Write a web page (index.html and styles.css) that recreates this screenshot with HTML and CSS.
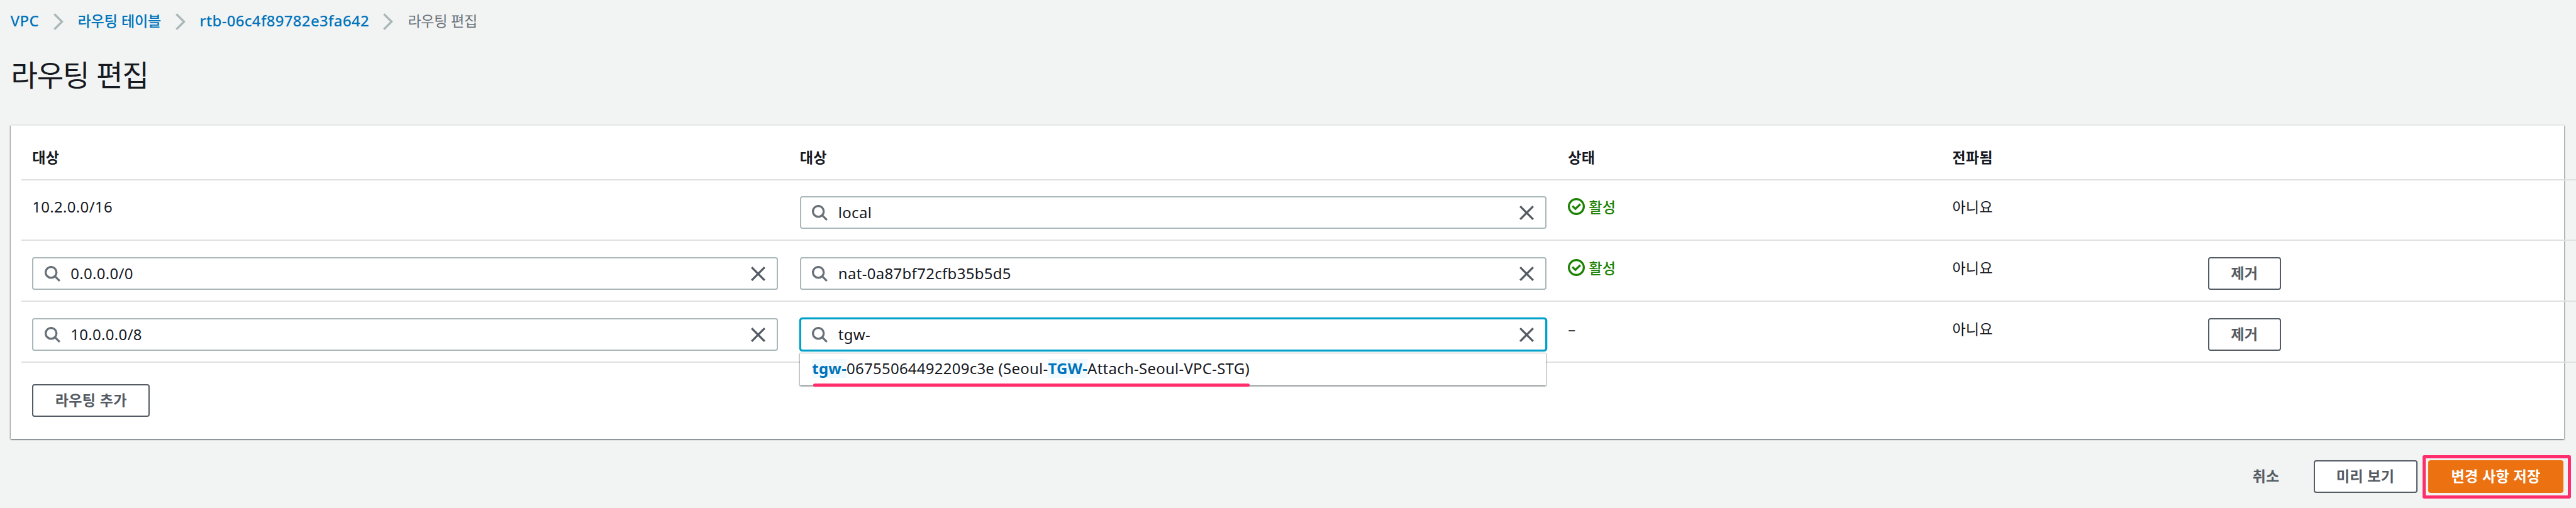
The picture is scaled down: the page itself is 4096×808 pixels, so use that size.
FILE: index.html
```
<!DOCTYPE html>
<html lang="ko">
<head>
<meta charset="utf-8">
<title>라우팅 편집</title>
<link rel="stylesheet" href="styles.css">
</head>
<body>
<svg width="0" height="0" class="defs">
  <symbol id="search" viewBox="0 0 25 25"><circle cx="10.2" cy="10.2" r="8.6" fill="none" stroke="#687078" stroke-width="3.3"/><path d="M16.3 16.3 L23.9 23.9" fill="none" stroke="#687078" stroke-width="3.3"/></symbol>
  <symbol id="close" viewBox="0 0 23 23"><path d="M1.2 1.2 L21.8 21.8 M21.8 1.2 L1.2 21.8" fill="none" stroke="#545b64" stroke-width="3.3"/></symbol>
  <symbol id="chevron" viewBox="0 0 16 27"><path d="M1.4 1.4 L13.6 13.5 L1.4 25.6" fill="none" stroke="#aab7b8" stroke-width="3.4"/></symbol>
  <symbol id="check" viewBox="0 0 27 27"><circle cx="13.5" cy="13.5" r="11.9" fill="none" stroke="#1d8102" stroke-width="3.2"/><path d="M7.2 12.6 L12 17.3 L19.8 9.8" fill="none" stroke="#1d8102" stroke-width="3.3"/></symbol>
</svg>
<nav class="crumbs">
  <a class="link">VPC</a>
  <svg class="chev"><use href="#chevron"/></svg>
  <a class="link ko">라우팅 테이블</a>
  <svg class="chev"><use href="#chevron"/></svg>
  <a class="link">rtb-06c4f89782e3fa642</a>
  <svg class="chev"><use href="#chevron"/></svg>
  <span class="current ko">라우팅 편집</span>
</nav>
<h1 class="title">라우팅 편집</h1>
<main class="panel">
  <div class="row head ko">
    <div class="cell">대상</div><div class="cell">대상</div><div class="cell">상태</div><div class="cell">전파됨</div><div class="cell"></div>
  </div>
  <div class="row first">
    <div class="cell text">10.2.0.0/16</div>
    <div class="cell"><div class="field"><svg class="search"><use href="#search"/></svg><span class="value">local</span><svg class="close"><use href="#close"/></svg></div></div>
    <div class="cell text"><span class="status ko"><svg class="check"><use href="#check"/></svg>활성</span></div>
    <div class="cell text ko">아니요</div>
    <div class="cell"></div>
  </div>
  <div class="row">
    <div class="cell"><div class="field"><svg class="search"><use href="#search"/></svg><span class="value">0.0.0.0/0</span><svg class="close"><use href="#close"/></svg></div></div>
    <div class="cell"><div class="field"><svg class="search"><use href="#search"/></svg><span class="value">nat-0a87bf72cfb35b5d5</span><svg class="close"><use href="#close"/></svg></div></div>
    <div class="cell text"><span class="status ko"><svg class="check"><use href="#check"/></svg>활성</span></div>
    <div class="cell text ko">아니요</div>
    <div class="cell"><div class="button ko remove">제거</div></div>
  </div>
  <div class="row">
    <div class="cell"><div class="field"><svg class="search"><use href="#search"/></svg><span class="value">10.0.0.0/8</span><svg class="close"><use href="#close"/></svg></div></div>
    <div class="cell"><div class="field focused"><svg class="search"><use href="#search"/></svg><span class="value">tgw-</span><svg class="close"><use href="#close"/></svg>
      <div class="dropdown"><span class="option"><mark class="match">tgw-</mark>06755064492209c3e (Seoul-<mark class="match">TGW-</mark>Attach-Seoul-VPC-STG)</span></div>
    </div></div>
    <div class="cell text">–</div>
    <div class="cell text ko">아니요</div>
    <div class="cell"><div class="button ko remove">제거</div></div>
  </div>
  <div class="button ko add">라우팅 추가</div>
</main>
<footer class="actions">
  <span class="cancel ko">취소</span>
  <div class="button ko preview">미리 보기</div>
  <div class="button ko save">변경 사항 저장</div>
</footer>
</body>
</html>
```
FILE: styles.css
```
* { box-sizing: border-box; }
body {
  margin: 0;
  width: 4096px;
  height: 808px;
  overflow: hidden;
  background: #f2f3f3;
  color: #16191f;
  font: 24px/36px "Noto Sans", "Noto Sans CJK KR", sans-serif;
  letter-spacing: 0.3px;
  white-space: nowrap;
}
svg { display: block; flex: none; }
.defs { position: absolute; }
.ko {
  font-family: "Noto Sans CJK KR", sans-serif;
  font-size: 23.1px;
  letter-spacing: 0.2px;
}
.crumbs {
  display: flex;
  align-items: center;
  height: 68px;
  padding-left: 16.5px;
}
.link { padding-bottom: 2px; color: #0073bb; font-weight: 500; }
.link.ko { padding-bottom: 4px; letter-spacing: -0.2px; }
.current.ko { padding-bottom: 4px; color: #687078; letter-spacing: -0.4px; }
.chev { width: 16px; height: 27px; margin: 0 23px 0 22.5px; }
.title {
  margin: 0;
  height: 131px;
  padding: 14.5px 0 0 17.5px;
  font: 400 46.2px/68px "Noto Sans CJK KR", sans-serif;
  letter-spacing: -1.2px;
}
.panel {
  width: 4060px;
  height: 499px;
  margin-left: 16.5px;
  padding-left: 17.5px;
  background: #fff;
  border-top: 1px solid #eaeded;
  box-shadow: 0 1px 2px #00141b80, 1px 1px 2px #00141b40, -1px 1px 2px #00141b40;
}
.row {
  display: grid;
  grid-template-columns: 1220.5px 1221.5px 611px 406.5px 1fr;
  width: 4062px;
  height: 97px;
  padding-top: 26px;
  border-bottom: 2px solid #e0e0e0;
}
.row.head { height: 87px; padding-top: 31px; font-weight: 700; }
.row.first { height: 96px; padding-top: 25px; }
.cell { padding: 0 17.3px; }
.cell.text { line-height: 33px; }
.cell.text.ko, .status.ko { line-height: 32px; }
.field {
  position: relative;
  display: flex;
  align-items: center;
  height: 52px;
  padding: 0 18px 0 17.5px;
  border: 2px solid #aab7b8;
  border-radius: 4px;
  background: #fff;
}
.field.focused { border-color: #00a1c9; box-shadow: 0 0 0 1.3px #00a1c9; }
.search { width: 25px; height: 25px; }
.value { flex: 1; padding-left: 16.5px; }
.close { width: 23px; height: 23px; }
.dropdown {
  position: absolute;
  z-index: 2;
  left: -1.5px;
  right: -1.5px;
  top: 53px;
  height: 52px;
  padding: 5px 0 0 19px;
  background: #fff;
  border-top: 2px solid #eaeded;
  box-shadow: 0 1px 2px #00141b80, 1px 1px 2px #00141b30, -1px 1px 2px #00141b30;
}
.option { display: inline-block; position: relative; line-height: 36px; letter-spacing: 0.24px; }
.option::after {
  content: "";
  position: absolute;
  left: 2px;
  right: 0;
  top: 42px;
  height: 5px;
  border-radius: 2.5px;
  background: #ff2d6b;
}
.match {
  display: inline-block;
  height: 30px;
  line-height: 30px;
  background: #f1faff;
  color: #0073bb;
  font-weight: 700;
}
.status { display: inline-flex; align-items: center; vertical-align: top; color: #1d8102; font-weight: 500; }
.check { width: 27px; height: 27px; margin-right: 6px; }
.button {
  position: relative;
  display: flex;
  align-items: center;
  justify-content: center;
  height: 52px;
  padding-bottom: 4px;
  border: 2px solid #545b64;
  border-radius: 4px;
  background: #fff;
  color: #545b64;
  font-weight: 700;
}
.remove { width: 116px; }
.add { width: 187px; margin: 34px 0 0 17.3px; }
.actions {
  display: flex;
  align-items: center;
  justify-content: flex-end;
  height: 52px;
  margin-top: 34px;
  padding-right: 20px;
}
.cancel { margin-right: 54px; padding-bottom: 4px; color: #545b64; font-weight: 700; }
.preview { width: 165px; margin-right: 17.5px; }
.save {
  width: 215px;
  border-color: #ec7211;
  background: #ec7211;
  color: #fff;
}
.save::after {
  content: "";
  position: absolute;
  left: -11px;
  right: -13.5px;
  top: -10.5px;
  bottom: -11px;
  border: 5px solid #ff2d6b;
  border-radius: 3px;
}
```
